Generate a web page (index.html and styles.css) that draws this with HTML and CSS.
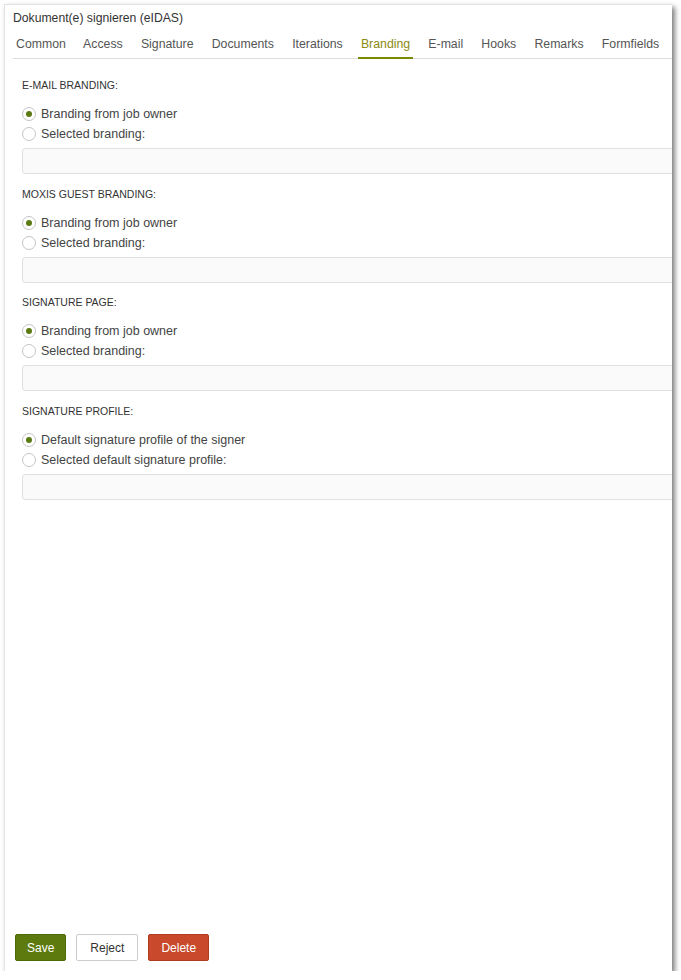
FILE: index.html
```html
<!DOCTYPE html>
<html lang="de">
<head>
<meta charset="UTF-8" />
<meta name="viewport" content="width=device-width, initial-scale=1" />
<title>Dokument(e) signieren (eIDAS)</title>
<link rel="stylesheet" href="styles.css">
</head>
<body>

<div class="panel">
  <div class="title">Dokument(e) signieren (eIDAS)</div>

  <nav class="tabs">
    <span class="tab">Common</span>
    <span class="tab">Access</span>
    <span class="tab">Signature</span>
    <span class="tab">Documents</span>
    <span class="tab">Iterations</span>
    <span class="tab active">Branding</span>
    <span class="tab">E-mail</span>
    <span class="tab">Hooks</span>
    <span class="tab">Remarks</span>
    <span class="tab">Formfields</span>
  </nav>

  <main class="content">
    <section class="group">
      <h4>E-Mail Branding:</h4>
      <label class="option"><input type="radio" name="mail" checked /> Branding from job owner</label>
      <label class="option"><input type="radio" name="mail" /> Selected branding:</label>
      <input type="text" class="field" />
    </section>

    <section class="group">
      <h4>Moxis Guest Branding:</h4>
      <label class="option"><input type="radio" name="guest" checked /> Branding from job owner</label>
      <label class="option"><input type="radio" name="guest" /> Selected branding:</label>
      <input type="text" class="field" />
    </section>

    <section class="group">
      <h4>Signature Page:</h4>
      <label class="option"><input type="radio" name="page" checked /> Branding from job owner</label>
      <label class="option"><input type="radio" name="page" /> Selected branding:</label>
      <input type="text" class="field" />
    </section>

    <section class="group">
      <h4>Signature Profile:</h4>
      <label class="option"><input type="radio" name="profile" checked /> Default signature profile of the signer</label>
      <label class="option"><input type="radio" name="profile" /> Selected default signature profile:</label>
      <input type="text" class="field" />
    </section>
  </main>

  <footer class="actions">
    <button class="btn btn-save">Save</button>
    <button class="btn btn-reject">Reject</button>
    <button class="btn btn-delete">Delete</button>
  </footer>
</div>

</body>
</html>
```

FILE: styles.css
```css
body {
  margin: 0;
  background: #fff;
  font-family: "Liberation Sans", Arial, sans-serif;
  color: #333;
}
.panel {
  margin: 4px 0 0 4px;
  width: 667px;
  height: 966px;
  background: #fff;
  border-left: 1px solid #e2e2e2;
  border-top: 1px solid #e2e2e2;
  box-shadow: 3px 3px 5px rgba(0, 0, 0, 0.5);
  display: flex;
  flex-direction: column;
  overflow: hidden;
}
.title {
  font-size: 12.2px;
  line-height: 15px;
  padding: 6px 0 0 8px;
  color: #333;
}
.tabs {
  display: flex;
  gap: 12.2px;
  margin: 11px 0 0 8px;
  border-bottom: 1px solid #ddd;
}
.tab {
  font-size: 12.3px;
  line-height: 15px;
  padding: 0 3px 5px;
  color: #555;
  border-bottom: 2px solid transparent;
  margin-bottom: -1px;
}
.tab:first-child {
  margin-right: -1px;
}
.tab.active {
  color: #8c8a10;
  border-bottom-color: #7a8a00;
}
.content {
  flex: 1;
  padding: 20px 0 0 17px;
}
.group {
  margin-bottom: 13.7px;
}
.group h4 {
  margin: 0 0 12px;
  font-size: 10.5px;
  line-height: 13px;
  font-weight: normal;
  text-transform: uppercase;
  color: #333;
}
.option {
  display: flex;
  align-items: center;
  gap: 5px;
  font-size: 12.5px;
  line-height: 20px;
  color: #444;
}
.option input {
  appearance: none;
  width: 14px;
  height: 14px;
  margin: 0;
  border: 1px solid #c4c4c4;
  border-radius: 50%;
  background: #fff;
  display: grid;
  place-content: center;
}
.option input:checked::before {
  content: "";
  width: 6px;
  height: 6px;
  border-radius: 50%;
  background: #5b7a12;
}
.field {
  display: block;
  box-sizing: border-box;
  width: calc(100% + 10px);
  height: 26px;
  margin-top: 4px;
  border: 1px solid #e0e0e0;
  border-radius: 3px;
  background: #fafafa;
}
.actions {
  display: flex;
  gap: 10px;
  padding: 0 0 10px 10px;
}
.btn {
  font-family: "Liberation Sans", Arial, sans-serif;
  font-size: 12px;
  height: 27px;
  padding: 0 13px;
  border-radius: 2px;
  cursor: pointer;
}
.btn-save {
  padding: 0 11px;
  background: #5c7a0e;
  border: 1px solid #4d6a08;
  color: #fff;
}
.btn-reject {
  background: #fff;
  border: 1px solid #ccc;
  color: #333;
}
.btn-delete {
  padding: 0 12px;
  background: #c8492b;
  border: 1px solid #b03c20;
  color: #fff;
}
```
